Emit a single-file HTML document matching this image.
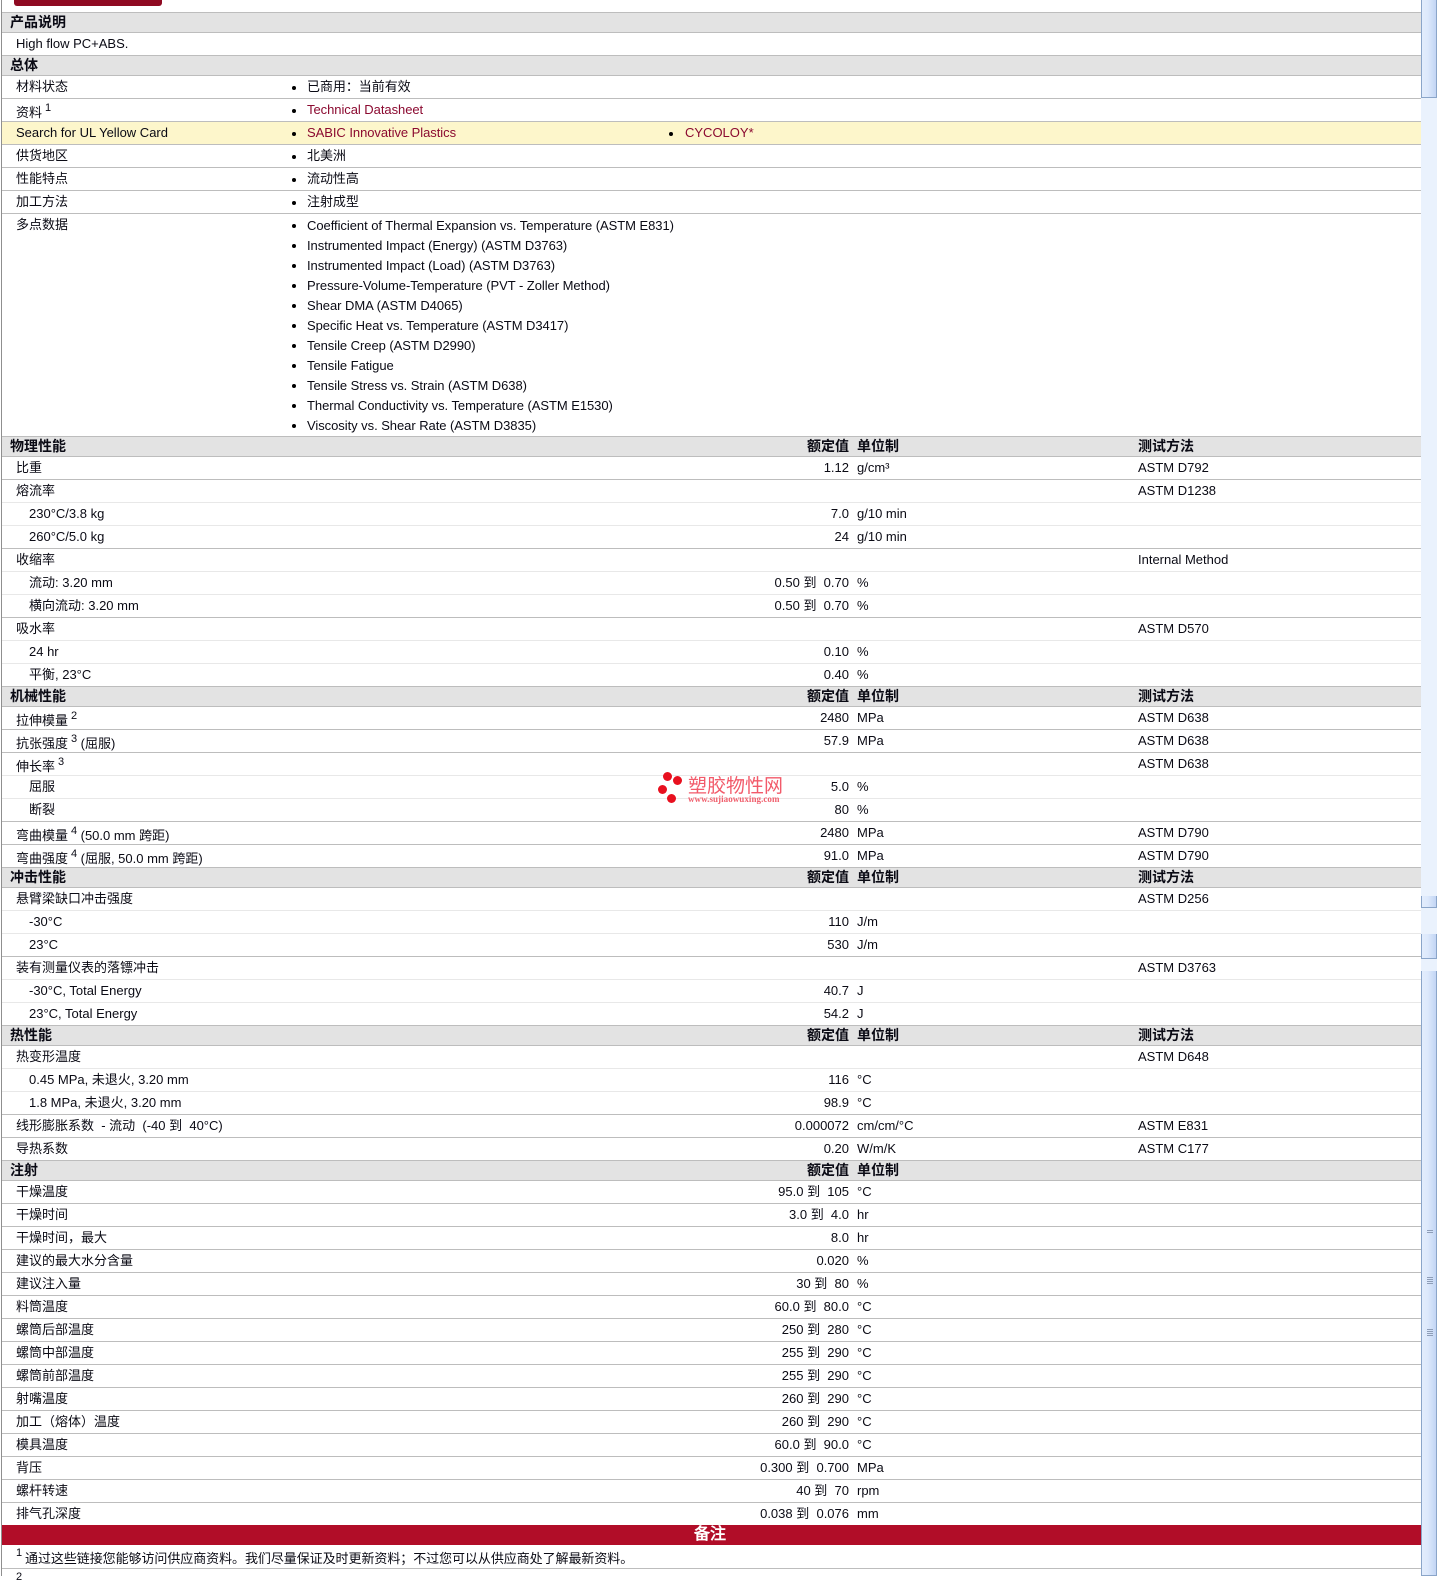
<!DOCTYPE html>
<html lang="zh"><head><meta charset="utf-8"><title>CYCOLOY</title>
<style>
html,body{margin:0;padding:0;background:#fff}
body{width:1440px;height:1576px;overflow:hidden;position:relative;font:13px/22px "Liberation Sans","WenQuanYi Zen Hei","Noto Sans CJK SC",sans-serif;color:#0a0a14}
#btn{position:absolute;left:14px;top:0;width:148px;height:6px;background:#8f0a22;border-radius:0 0 3px 3px}
#lb{position:absolute;left:1px;top:0;width:1px;height:1576px;background:#8f8f8f}
#t{position:absolute;left:2px;top:12px;width:1419px}
.h,.r{position:relative;box-sizing:border-box;border-top:1px solid #bdbdbd}
.h{height:20px;background:#e3e3e3;line-height:19px;font-weight:bold;font-size:14px}
.r{height:23px}
.s{border-top-color:#e8e8e8}
.y{background:#fdf6cb}
.n{height:20px;background:#b10d28;border:0;color:#fff;text-align:center;font:bold 16px/20px "Liberation Sans","WenQuanYi Zen Hei",sans-serif;position:relative;padding-right:3px;box-sizing:border-box}
.r span,.h span{position:absolute;white-space:pre;top:0}
.t{left:8px}
.a{left:14px}
.i{left:27px}
.d{left:305px;letter-spacing:-.05px}
.e{left:683px}
.v{right:572px}
.u{left:855px}
.m{left:1136px}
.a.q{top:3px}
sup{position:absolute;font-size:11px;line-height:11px;margin-top:1px;margin-left:3px}
a{color:#8b0a30;text-decoration:none}
.o{position:absolute;width:4px;height:4px;border-radius:50%;background:#000;top:10px;left:290px}
.o2{left:667px}
.li{position:relative;height:20px;line-height:20px}
.li span{top:0}
.li .o{top:8px}
#wm{position:absolute;left:0;top:0}
#wm i{position:absolute;width:9px;height:9px;border-radius:50%;background:#e8101f}
#wmt{position:absolute;left:688px;top:774px;font:19px/22px "WenQuanYi Zen Hei","Noto Sans CJK SC",sans-serif;color:#f25a6a;white-space:nowrap}
#wmu{position:absolute;left:688px;top:794px;font:bold 9px/10px "Liberation Serif",serif;color:#f0606e;white-space:nowrap;letter-spacing:.05px}
#sb{position:absolute;left:1421px;top:0;width:16px;height:1576px;background:#eaf2fd}
#sb b{position:absolute;left:0;width:16px;box-sizing:border-box;border:1px solid #8aa5c9;border-top-width:0;background:linear-gradient(90deg,#e2edfd 0,#dde9fc 40%,#c2d5f4 100%)}
#sb i{position:absolute;left:6px;width:6px;height:1px;background:#8d9db8}
#se{position:absolute;left:1437px;top:0;width:3px;height:1576px;background:#fff}
</style></head><body>
<div id="btn"></div><div id="lb"></div>
<div id="t">
<div class="h"><span class="t">产品说明</span></div>
<div class="r"><span class="a">High flow PC+ABS.</span></div>
<div class="h"><span class="t">总体</span></div>
<div class="r"><span class="a">材料状态</span><em class="o"></em><span class="d">已商用：当前有效</span></div>
<div class="r"><span class="a q">资料<sup>1</sup></span><em class="o"></em><span class="d"><a>Technical Datasheet</a></span></div>
<div class="r y"><span class="a">Search for UL Yellow Card</span><em class="o"></em><span class="d"><a>SABIC Innovative Plastics</a></span><em class="o o2"></em><span class="e"><a>CYCOLOY*</a></span></div>
<div class="r"><span class="a">供货地区</span><em class="o"></em><span class="d">北美洲</span></div>
<div class="r"><span class="a">性能特点</span><em class="o"></em><span class="d">流动性高</span></div>
<div class="r"><span class="a">加工方法</span><em class="o"></em><span class="d">注射成型</span></div>
<div class="r" style="height:223px"><span class="a">多点数据</span>
<div style="position:absolute;left:0;top:2px;width:100%">
<div class="li"><em class="o"></em><span class="d">Coefficient of Thermal Expansion vs. Temperature (ASTM E831)</span></div>
<div class="li"><em class="o"></em><span class="d">Instrumented Impact (Energy) (ASTM D3763)</span></div>
<div class="li"><em class="o"></em><span class="d">Instrumented Impact (Load) (ASTM D3763)</span></div>
<div class="li"><em class="o"></em><span class="d">Pressure-Volume-Temperature (PVT - Zoller Method)</span></div>
<div class="li"><em class="o"></em><span class="d">Shear DMA (ASTM D4065)</span></div>
<div class="li"><em class="o"></em><span class="d">Specific Heat vs. Temperature (ASTM D3417)</span></div>
<div class="li"><em class="o"></em><span class="d">Tensile Creep (ASTM D2990)</span></div>
<div class="li"><em class="o"></em><span class="d">Tensile Fatigue</span></div>
<div class="li"><em class="o"></em><span class="d">Tensile Stress vs. Strain (ASTM D638)</span></div>
<div class="li"><em class="o"></em><span class="d">Thermal Conductivity vs. Temperature (ASTM E1530)</span></div>
<div class="li"><em class="o"></em><span class="d">Viscosity vs. Shear Rate (ASTM D3835)</span></div>
</div></div>
<div class="h"><span class="t">物理性能</span><span class="v">额定值</span><span class="u">单位制</span><span class="m">测试方法</span></div>
<div class="r"><span class="a">比重</span><span class="v">1.12</span><span class="u">g/cm³</span><span class="m">ASTM D792</span></div>
<div class="r"><span class="a">熔流率</span><span class="m">ASTM D1238</span></div>
<div class="r s"><span class="i">230°C/3.8 kg</span><span class="v">7.0</span><span class="u">g/10 min</span></div>
<div class="r s"><span class="i">260°C/5.0 kg</span><span class="v">24</span><span class="u">g/10 min</span></div>
<div class="r"><span class="a">收缩率</span><span class="m">Internal Method</span></div>
<div class="r s"><span class="i">流动: 3.20 mm</span><span class="v">0.50 到  0.70</span><span class="u">%</span></div>
<div class="r s"><span class="i">横向流动: 3.20 mm</span><span class="v">0.50 到  0.70</span><span class="u">%</span></div>
<div class="r"><span class="a">吸水率</span><span class="m">ASTM D570</span></div>
<div class="r s"><span class="i">24 hr</span><span class="v">0.10</span><span class="u">%</span></div>
<div class="r s"><span class="i">平衡, 23°C</span><span class="v">0.40</span><span class="u">%</span></div>
<div class="h"><span class="t">机械性能</span><span class="v">额定值</span><span class="u">单位制</span><span class="m">测试方法</span></div>
<div class="r"><span class="a q">拉伸模量<sup>2</sup></span><span class="v">2480</span><span class="u">MPa</span><span class="m">ASTM D638</span></div>
<div class="r"><span class="a q">抗张强度<sup>3</sup><span style="left:61px"> (屈服)</span></span><span class="v">57.9</span><span class="u">MPa</span><span class="m">ASTM D638</span></div>
<div class="r"><span class="a q">伸长率<sup>3</sup></span><span class="m">ASTM D638</span></div>
<div class="r s"><span class="i">屈服</span><span class="v">5.0</span><span class="u">%</span></div>
<div class="r s"><span class="i">断裂</span><span class="v">80</span><span class="u">%</span></div>
<div class="r"><span class="a q">弯曲模量<sup>4</sup><span style="left:61px"> (50.0 mm 跨距)</span></span><span class="v">2480</span><span class="u">MPa</span><span class="m">ASTM D790</span></div>
<div class="r"><span class="a q">弯曲强度<sup>4</sup><span style="left:61px"> (屈服, 50.0 mm 跨距)</span></span><span class="v">91.0</span><span class="u">MPa</span><span class="m">ASTM D790</span></div>
<div class="h"><span class="t">冲击性能</span><span class="v">额定值</span><span class="u">单位制</span><span class="m">测试方法</span></div>
<div class="r"><span class="a">悬臂梁缺口冲击强度</span><span class="m">ASTM D256</span></div>
<div class="r s"><span class="i">-30°C</span><span class="v">110</span><span class="u">J/m</span></div>
<div class="r s"><span class="i">23°C</span><span class="v">530</span><span class="u">J/m</span></div>
<div class="r"><span class="a">装有测量仪表的落镖冲击</span><span class="m">ASTM D3763</span></div>
<div class="r s"><span class="i">-30°C, Total Energy</span><span class="v">40.7</span><span class="u">J</span></div>
<div class="r s"><span class="i">23°C, Total Energy</span><span class="v">54.2</span><span class="u">J</span></div>
<div class="h"><span class="t">热性能</span><span class="v">额定值</span><span class="u">单位制</span><span class="m">测试方法</span></div>
<div class="r"><span class="a">热变形温度</span><span class="m">ASTM D648</span></div>
<div class="r s"><span class="i">0.45 MPa, 未退火, 3.20 mm</span><span class="v">116</span><span class="u">°C</span></div>
<div class="r s"><span class="i">1.8 MPa, 未退火, 3.20 mm</span><span class="v">98.9</span><span class="u">°C</span></div>
<div class="r"><span class="a">线形膨胀系数  - 流动  (-40 到  40°C)</span><span class="v">0.000072</span><span class="u">cm/cm/°C</span><span class="m">ASTM E831</span></div>
<div class="r"><span class="a">导热系数</span><span class="v">0.20</span><span class="u">W/m/K</span><span class="m">ASTM C177</span></div>
<div class="h"><span class="t">注射</span><span class="v">额定值</span><span class="u">单位制</span></div>
<div class="r"><span class="a">干燥温度</span><span class="v">95.0 到  105</span><span class="u">°C</span></div>
<div class="r"><span class="a">干燥时间</span><span class="v">3.0 到  4.0</span><span class="u">hr</span></div>
<div class="r"><span class="a">干燥时间，最大</span><span class="v">8.0</span><span class="u">hr</span></div>
<div class="r"><span class="a">建议的最大水分含量</span><span class="v">0.020</span><span class="u">%</span></div>
<div class="r"><span class="a">建议注入量</span><span class="v">30 到  80</span><span class="u">%</span></div>
<div class="r"><span class="a">料筒温度</span><span class="v">60.0 到  80.0</span><span class="u">°C</span></div>
<div class="r"><span class="a">螺筒后部温度</span><span class="v">250 到  280</span><span class="u">°C</span></div>
<div class="r"><span class="a">螺筒中部温度</span><span class="v">255 到  290</span><span class="u">°C</span></div>
<div class="r"><span class="a">螺筒前部温度</span><span class="v">255 到  290</span><span class="u">°C</span></div>
<div class="r"><span class="a">射嘴温度</span><span class="v">260 到  290</span><span class="u">°C</span></div>
<div class="r"><span class="a">加工（熔体）温度</span><span class="v">260 到  290</span><span class="u">°C</span></div>
<div class="r"><span class="a">模具温度</span><span class="v">60.0 到  90.0</span><span class="u">°C</span></div>
<div class="r"><span class="a">背压</span><span class="v">0.300 到  0.700</span><span class="u">MPa</span></div>
<div class="r"><span class="a">螺杆转速</span><span class="v">40 到  70</span><span class="u">rpm</span></div>
<div class="r"><span class="a">排气孔深度</span><span class="v">0.038 到  0.076</span><span class="u">mm</span></div>
<div class="n">备注</div>
<div class="r" style="border:0"><span class="a" style="top:-3px;font-size:11px">1</span><span style="left:23px;top:3px;letter-spacing:-.06px">通过这些链接您能够访问供应商资料。我们尽量保证及时更新资料；不过您可以从供应商处了解最新资料。</span></div>
<div class="r"><span class="a" style="font-size:11px;top:-3px">2</span></div>
</div>
<div id="wm">
<i style="left:663px;top:772px"></i><i style="left:673px;top:776px"></i><i style="left:658px;top:785px"></i><i style="left:667px;top:794px"></i>
</div>
<div id="wmt">塑胶物性网</div>
<div id="wmu">www.sujiaowuxing.com</div>
<div id="sb">
<b style="top:0;height:98px"></b>
<b style="top:896px;height:12px"></b>
<b style="top:934px;height:25px"></b>
<b style="top:971px;height:605px"></b>
<i style="top:1230px"></i><i style="top:1232px"></i>
<i style="top:1277px"></i><i style="top:1279px"></i><i style="top:1281px"></i><i style="top:1283px"></i>
<i style="top:1329px"></i><i style="top:1331px"></i><i style="top:1333px"></i><i style="top:1335px"></i>
</div>
<div id="se"></div>
</body></html>
